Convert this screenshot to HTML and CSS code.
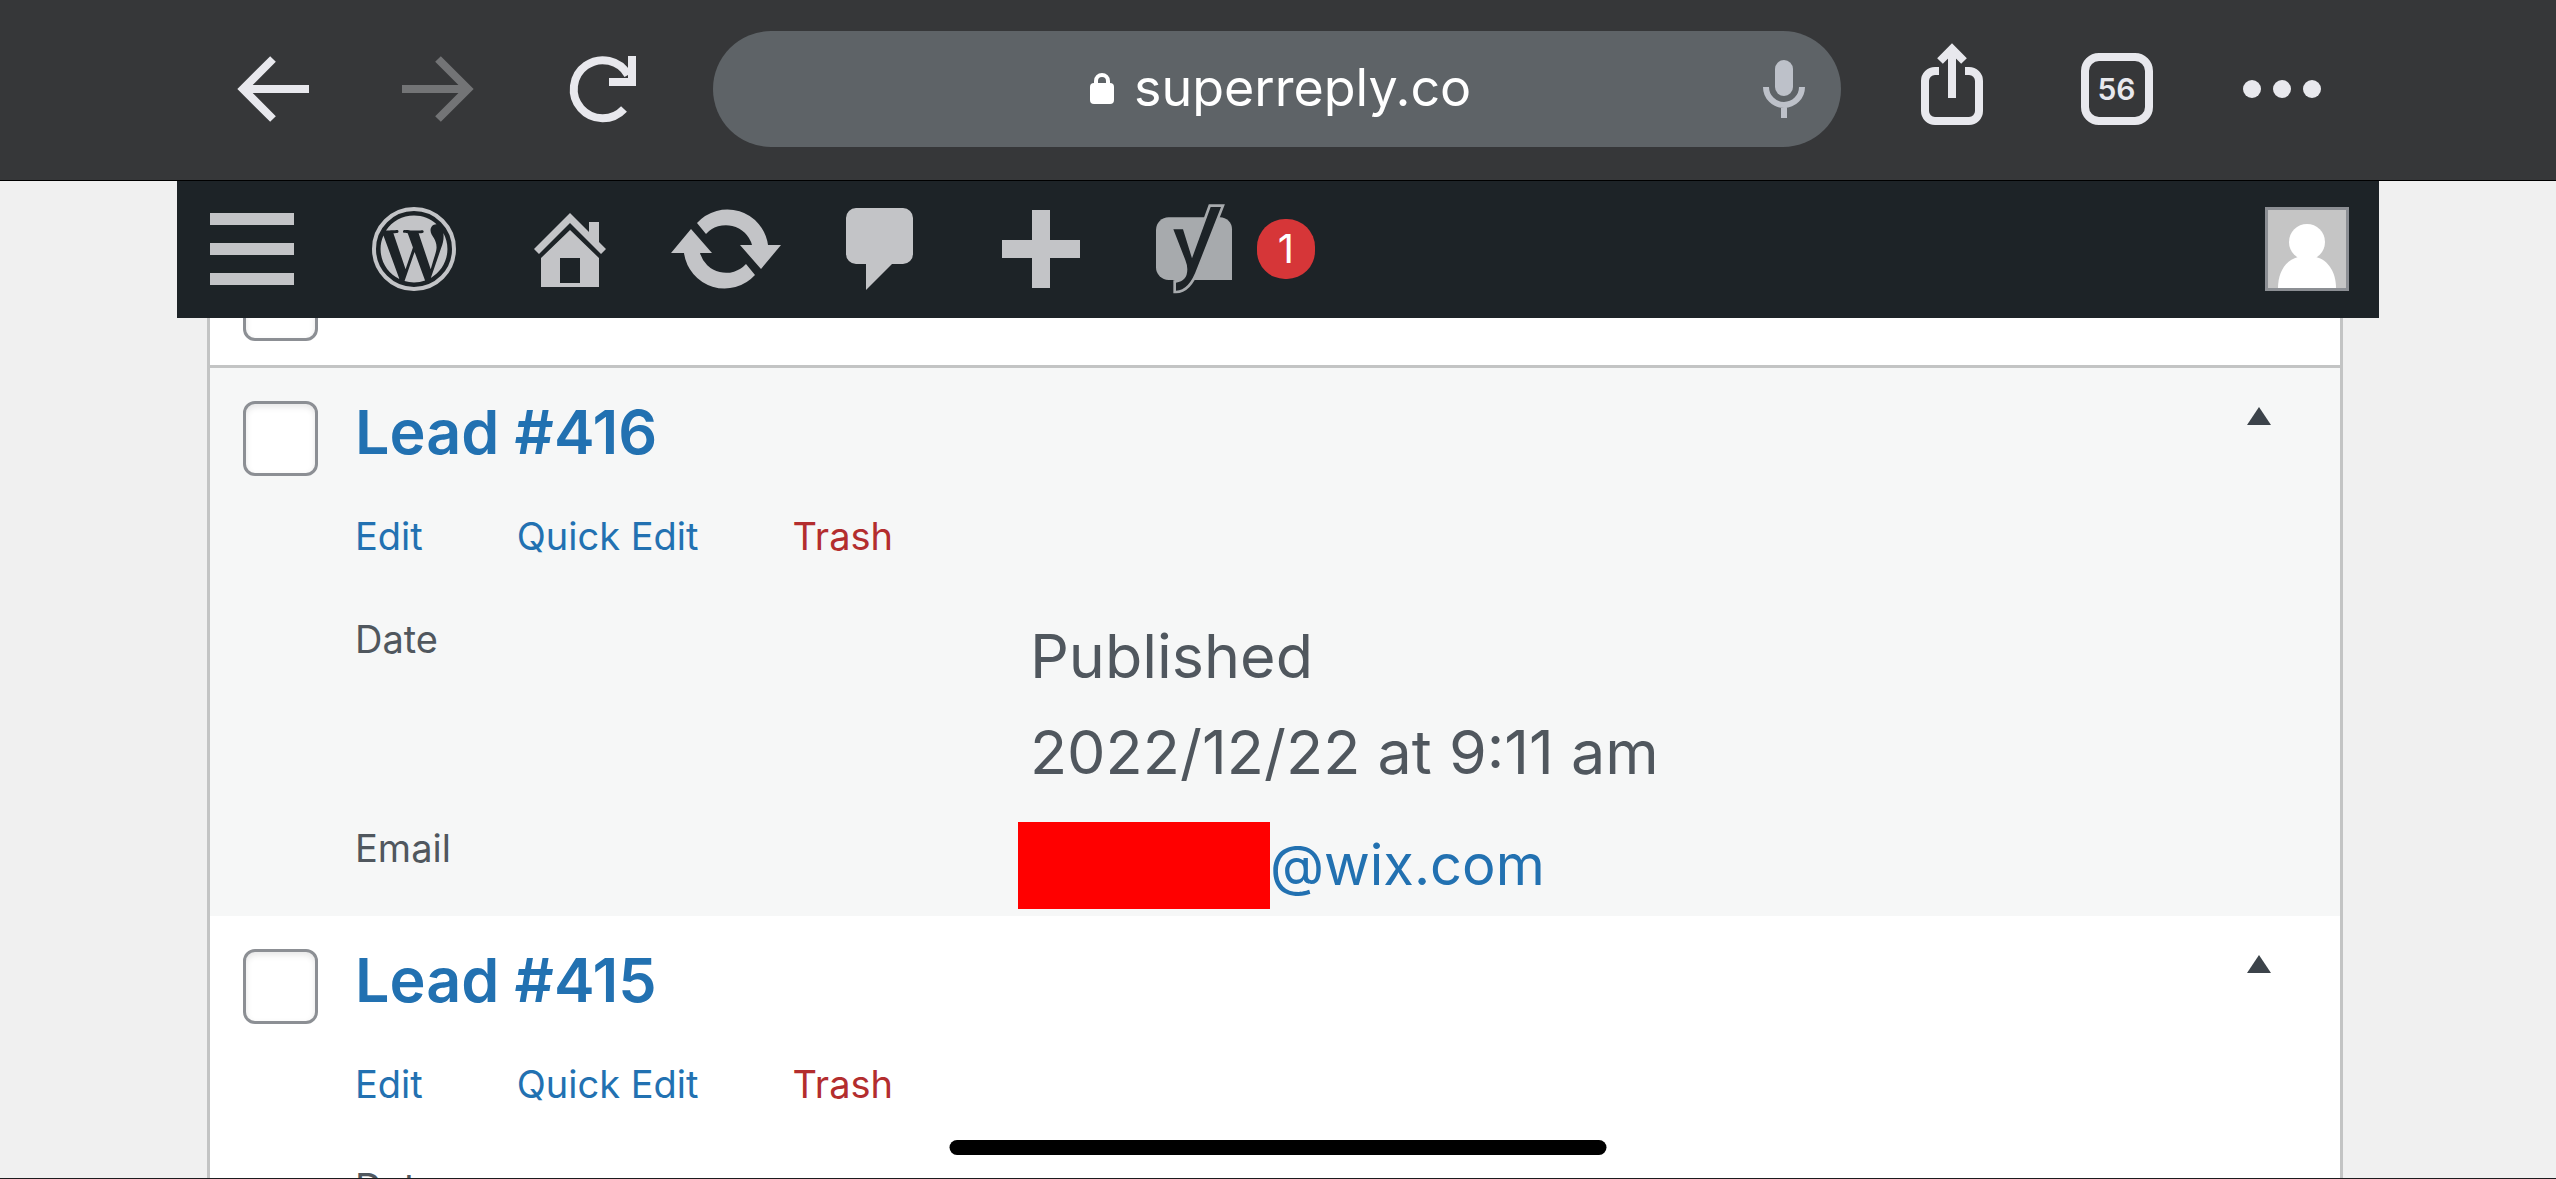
FILE: index.html
```html
<!DOCTYPE html>
<html lang="en">
<head>
  <meta charset="UTF-8">
  <meta name="viewport" content="width=device-width, initial-scale=1.0">
  <title>Leads</title>
  <link rel="stylesheet" href="styles.css">
</head>
<body>
  <header class="toolbar">
    <nav class="toolbar-group">
      <button class="tool" aria-label="Back">
        <svg class="tool-icon" viewBox="0 0 72 72"><path d="M72 36H6M36 6L6 36l30 30"/></svg>
      </button>
      <button class="tool tool-off" aria-label="Forward" disabled>
        <svg class="tool-icon" viewBox="0 0 72 72"><path d="M0 36h66M36 6l30 30-30 30"/></svg>
      </button>
      <button class="tool" aria-label="Reload">
        <svg class="tool-icon" viewBox="0 0 72 72"><path d="M57 56A29 29 0 1 1 61 22"/><path d="M65 3v26H42"/></svg>
      </button>
    </nav>
    <div class="address">
      <div class="address-site">
        <svg class="lock" viewBox="0 0 24 31"><rect y="10" width="24" height="21" rx="4"/><path d="M6 12V8a6 6 0 0 1 12 0v4"/></svg>
        <input class="url" type="text" value="superreply.co" aria-label="Address">
      </div>
      <button class="mic" aria-label="Voice search">
        <svg viewBox="0 0 42 58"><rect x="12" width="18" height="36" rx="9"/><path d="M3 27a18 18 0 0 0 36 0M21 45v13"/></svg>
      </button>
    </div>
    <nav class="toolbar-group">
      <button class="tool" aria-label="Share">
        <svg class="tool-icon" viewBox="0 0 72 72"><path d="M23 18h-4a10 10 0 0 0-10 10v30a10 10 0 0 0 10 10h34a10 10 0 0 0 10-10V28a10 10 0 0 0-10-10h-4"/><path d="M36 45V-3M24 8L36-4 48 8"/></svg>
      </button>
      <button class="tool" aria-label="Tabs"><span class="tab-count">56</span></button>
      <button class="tool" aria-label="More">
        <svg class="tool-icon dots" viewBox="0 0 72 72"><circle cx="6" cy="36" r="9"/><circle cx="36" cy="36" r="9"/><circle cx="66" cy="36" r="9"/></svg>
      </button>
    </nav>
  </header>

  <nav class="adminbar">
    <button class="bar-item menu" aria-label="Menu">
      <svg viewBox="0 0 84 96"><path d="M0 12h84v12H0zM0 42h84v12H0zM0 72h84v12H0z"/></svg>
    </button>
    <a class="bar-item" href="#" aria-label="About WordPress">
      <svg viewBox="0 0 120 96">
        <circle class="ring" cx="60" cy="48" r="40"/>
        <path transform="translate(22.8 10.8) scale(3.1)" d="M21.469 6.825c.84 1.537 1.318 3.3 1.318 5.175 0 3.979-2.156 7.456-5.363 9.325l3.295-9.527c.615-1.54.82-2.771.82-3.864 0-.405-.026-.78-.07-1.11m-7.981.105c.647-.03 1.232-.105 1.232-.105.582-.075.514-.93-.067-.899 0 0-1.755.135-2.88.135-1.064 0-2.85-.15-2.85-.15-.585-.03-.661.855-.075.885 0 0 .54.061 1.125.09l1.68 4.605-2.37 7.08L5.354 6.9c.649-.03 1.234-.1 1.234-.1.585-.075.516-.93-.065-.896 0 0-1.746.138-2.874.138-.2 0-.438-.008-.69-.015C4.911 3.15 8.235 1.215 12 1.215c2.809 0 5.365 1.072 7.286 2.833-.046-.003-.091-.009-.141-.009-1.06 0-1.812.923-1.812 1.914 0 .89.513 1.643 1.06 2.531.411.72.89 1.643.89 2.977 0 .915-.354 1.994-.821 3.479l-1.075 3.585-3.9-11.61zM12 22.784c-1.059 0-2.081-.153-3.048-.437l3.237-9.406 3.315 9.087c.024.053.05.101.078.149-1.12.393-2.325.609-3.582.609M1.211 12c0-1.564.336-3.05.935-4.39L7.29 21.709C3.694 19.96 1.212 16.271 1.211 12"/>
      </svg>
    </a>
    <a class="bar-item" href="#" aria-label="Visit site">
      <svg viewBox="0 0 120 96">
        <path d="M24 48l36-36 19 19V21h10v20l7 7-5 5-31-31-31 31z"/>
        <path fill-rule="evenodd" d="M60 29l29 28v29H31V57zM50 57v25h20V57z"/>
      </svg>
    </a>
    <a class="bar-item" href="#" aria-label="Updates">
      <svg viewBox="0 0 120 96">
        <path d="M31 22A41 41 0 0 1 102 44h13L95 68 74 44h12A27 27 0 0 0 40 33z"/>
        <path transform="rotate(180 60 48)" d="M31 22A41 41 0 0 1 102 44h13L95 68 74 44h12A27 27 0 0 0 40 33z"/>
      </svg>
    </a>
    <a class="bar-item" href="#" aria-label="Comments">
      <svg viewBox="0 0 120 96"><path d="M34 7h47a10 10 0 0 1 10 10v36a10 10 0 0 1-10 10H70L44 89V63H34a10 10 0 0 1-10-10V17A10 10 0 0 1 34 7z"/></svg>
    </a>
    <a class="bar-item" href="#" aria-label="New">
      <svg viewBox="0 0 120 96"><path d="M54 9h18v30h30v18H72v30H54V57H24V39h30z"/></svg>
    </a>
    <a class="bar-item seo" href="#" aria-label="SEO">
      <svg viewBox="102 63 360 288">
        <path d="M206 112h154a36 36 0 0 1 36 36v152H206a38 38 0 0 1-38-38V150a38 38 0 0 1 38-38z"/>
        <path class="seo-mark" d="M220 148h29l27 87 56-154h31l-72 184q-24 67-63 67v-24q34-4 34-40 0-13-6-28z"/>
      </svg>
      <span class="badge">1</span>
    </a>
    <a class="avatar" href="#" aria-label="Profile">
      <svg viewBox="0 0 78 78"><circle cx="39" cy="32" r="18"/><path d="M10 78c0-16 8-28 20-31h18c12 3 20 15 20 31z"/></svg>
    </a>
  </nav>

  <main class="content">
    <table class="leads">
      <thead>
        <tr>
          <td class="check"><input type="checkbox" aria-label="Select all"></td>
          <th></th>
        </tr>
      </thead>
      <tbody>
        <tr>
          <td class="check"><input type="checkbox" aria-label="Select Lead #416"></td>
          <td class="lead">
            <div class="lead-head">
              <a class="lead-title" href="#">Lead #416</a>
              <button class="toggle" aria-label="Show less"><svg viewBox="0 0 24 18"><path d="M12 0l12 18H0z"/></svg></button>
            </div>
            <div class="actions">
              <a href="#">Edit</a>
              <a href="#">Quick Edit</a>
              <a class="trash" href="#">Trash</a>
            </div>
            <dl class="details">
              <dt>Date</dt>
              <dd>Published<br>2022/12/22 at 9:11 am</dd>
              <dt>Email</dt>
              <dd class="email"><span class="redacted"></span><a href="#">@wix.com</a></dd>
            </dl>
          </td>
        </tr>
        <tr>
          <td class="check"><input type="checkbox" aria-label="Select Lead #415"></td>
          <td class="lead">
            <div class="lead-head">
              <a class="lead-title" href="#">Lead #415</a>
              <button class="toggle" aria-label="Show less"><svg viewBox="0 0 24 18"><path d="M12 0l12 18H0z"/></svg></button>
            </div>
            <div class="actions">
              <a href="#">Edit</a>
              <a href="#">Quick Edit</a>
              <a class="trash" href="#">Trash</a>
            </div>
            <dl class="details">
              <dt>Date</dt>
              <dd></dd>
            </dl>
          </td>
        </tr>
      </tbody>
    </table>
  </main>
  <div class="home-indicator"></div>
</body>
</html>
```
FILE: styles.css
```css
* {
  box-sizing: border-box;
}
body {
  margin: 0;
  height: 100vh;
  overflow: hidden;
  display: flex;
  flex-direction: column;
  font-family: Inter, "Liberation Sans", sans-serif;
  background-color: #f0f0f0;
  color: #50575e;
  border-bottom: 1px solid #1c1c1e;
}
button {
  padding: 0;
  border: none;
  background: none;
  font-family: inherit;
  cursor: pointer;
}
a {
  color: #2271b1;
  text-decoration: none;
}
svg {
  display: block;
  overflow: visible;
}

/* Browser toolbar */
.toolbar {
  display: flex;
  align-items: center;
  flex: none;
  height: 181px;
  padding: 0 192px 3px 190px;
  background-color: #363739;
  border-bottom: 1px solid #000;
}
.toolbar-group {
  display: flex;
}
.tool {
  display: flex;
  align-items: center;
  justify-content: center;
  width: 165px;
  height: 116px;
  color: #e8e8ed;
}
.tool-off {
  color: #737476;
}
.tool-icon {
  width: 72px;
  height: 72px;
  fill: none;
  stroke: currentColor;
  stroke-width: 8;
}
.dots {
  fill: currentColor;
  stroke: none;
}
.tab-count {
  width: 72px;
  height: 72px;
  border: 8px solid currentColor;
  border-radius: 18px;
  font-size: 30px;
  font-weight: 600;
  line-height: 56px;
}
.address {
  flex: 1;
  display: grid;
  grid-template-columns: 1fr auto 1fr;
  align-items: center;
  height: 116px;
  margin: 0 28px;
  padding: 0 36px 0 46px;
  border-radius: 58px;
  background-color: #5e6367;
}
.address-site {
  grid-column: 2;
  display: flex;
  align-items: center;
  gap: 20px;
}
.lock {
  width: 24px;
  height: 31px;
  fill: #fff;
}
.lock path {
  fill: none;
  stroke: #fff;
  stroke-width: 4;
}
.url {
  width: 340px;
  height: 80px;
  padding: 0 0 2px;
  border: none;
  outline: none;
  background: none;
  color: #fff;
  font-family: inherit;
  font-size: 52px;
}
.mic {
  justify-self: end;
}
.mic svg {
  width: 42px;
  height: 58px;
  fill: #bdc1c9;
}
.mic path {
  fill: none;
  stroke: #bdc1c9;
  stroke-width: 6;
}

/* Admin bar */
.adminbar {
  position: relative;
  z-index: 1;
  flex: none;
  display: flex;
  align-items: center;
  height: 137px;
  margin: 0 177px;
  padding-bottom: 1px;
  background-color: #1d2327;
}
.bar-item {
  display: flex;
  align-items: center;
  width: 156px;
  padding: 0 18px;
}
.bar-item svg {
  flex: none;
  width: 120px;
  height: 96px;
  fill: #c3c4c7;
}
.menu {
  width: 159px;
  padding: 0 33px;
}
.menu svg {
  width: 84px;
}
.bar-item .ring {
  fill: none;
  stroke: #c3c4c7;
  stroke-width: 4;
}
.seo {
  width: auto;
  gap: 3px;
}
.seo svg {
  fill: #a7aaad;
}
.seo .seo-mark {
  fill: #1d2327;
  stroke: #a7aaad;
  stroke-width: 16;
  paint-order: stroke;
}
.badge {
  width: 58px;
  height: 60px;
  border-radius: 28px;
  background-color: #d63638;
  color: #fff;
  font-size: 40px;
  line-height: 60px;
  text-align: center;
}
.avatar {
  margin-left: auto;
  margin-right: 30px;
  width: 84px;
  height: 84px;
  border: 3px solid #8c8f94;
  background-color: #c5c5c5;
}
.avatar svg {
  fill: #fff;
}

/* Leads list, scrolled partly under the admin bar */
.content {
  margin: -55px 213px 0 207px;
}
.leads {
  width: 100%;
  border: 3px solid #c3c4c4;
  border-collapse: separate;
  border-spacing: 0;
  background-color: #fff;
}
.leads td,
.leads th {
  padding: 0;
  vertical-align: top;
}
.leads thead td,
.leads thead th {
  height: 102px;
  border-bottom: 3px solid #c3c4c4;
}
.leads tbody tr:nth-child(odd) {
  background-color: #f6f7f7;
}
.leads .check {
  width: 145px;
  padding: 33px 0 0 33px;
}
.leads thead .check {
  padding-top: 0;
}
.check input {
  appearance: none;
  display: block;
  width: 75px;
  height: 75px;
  margin: 0;
  border: 3px solid #8c8f94;
  border-radius: 12px;
  background-color: #fff;
  box-shadow: inset 0 3px 6px rgba(0, 0, 0, 0.1);
}
.leads .lead {
  padding: 28px 0 3px;
}
.lead-head {
  display: flex;
  justify-content: space-between;
  align-items: flex-start;
}
.lead-title {
  font-size: 61px;
  font-weight: 600;
  line-height: 72px;
}
.toggle {
  padding: 11px 69px 0 0;
}
.toggle svg {
  width: 24px;
  height: 18px;
  fill: #3c434a;
}
.actions {
  display: flex;
  gap: 94px;
  margin-top: 44px;
  font-size: 38px;
  line-height: 48px;
}
.actions .trash {
  color: #b32d2e;
}
.details {
  display: grid;
  grid-template-columns: 34% 1fr;
  row-gap: 17px;
  margin: 48px 0 0;
}
.details dt {
  font-size: 38px;
  line-height: 62px;
}
.details dd {
  margin: 0;
  font-size: 61px;
  line-height: 96px;
}
.details .email {
  display: flex;
  align-items: center;
  font-size: 56px;
}
.redacted {
  width: 252px;
  height: 87px;
  margin-left: -12px;
  background-color: #f00;
}

.home-indicator {
  position: fixed;
  bottom: 24px;
  left: 50%;
  width: 657px;
  height: 15px;
  transform: translateX(-50%);
  border-radius: 8px;
  background-color: #000;
}
```
